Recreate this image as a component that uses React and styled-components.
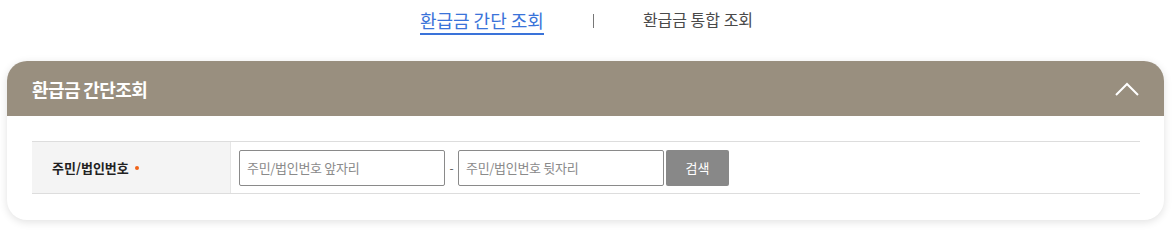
import React from "react";
import styled, { createGlobalStyle } from "styled-components";

const Global = createGlobalStyle`
  html, body { margin: 0; padding: 0; background: #fff; }
  body { font-family: "Noto Sans CJK KR", "Noto Sans", sans-serif; }
  * { box-sizing: border-box; }
`;

const Page = styled.div`
  width: 1175px;
  height: 237px;
  padding-top: 5px;
`;

const Tabs = styled.nav`
  display: flex;
  justify-content: center;
  align-items: center;
  gap: 49px;
  height: 31px;
  padding-right: 2px;
`;

const Tab = styled.a`
  font-size: ${(p) => (p.$active ? "18px" : "16px")};
  color: ${(p) => (p.$active ? "#3a73d9" : "#4a4a4a")};
  font-weight: 400;
  line-height: 25px;
  text-decoration: none;
  padding-top: ${(p) => (p.$active ? "2px" : "0")};
  border-bottom: 2px solid ${(p) => (p.$active ? "#3a73d9" : "transparent")};
`;

const Sep = styled.span`
  width: 1px;
  height: 14px;
  background: #777;
`;

const Card = styled.section`
  margin: 25px 11px 0 7px;
  border-radius: 20px;
  background: #fff;
  box-shadow: 0 2px 8px rgba(0, 0, 0, 0.12);
  overflow: hidden;
`;

const Header = styled.header`
  height: 55px;
  background: #998f7f;
  display: flex;
  align-items: center;
  justify-content: space-between;
  padding: 0 25px;
`;

const Title = styled.h2`
  margin: 0;
  font-size: 18px;
  font-weight: 700;
  color: #fff;
  letter-spacing: -0.6px;
`;

const Body = styled.div`
  padding: 25px 24px 26px 25px;
`;

const Row = styled.div`
  display: grid;
  grid-template-columns: 199px 1fr;
  border-top: 1px solid #ddd;
  border-bottom: 1px solid #ddd;
  height: 53px;
`;

const Label = styled.div`
  background: #f4f4f4;
  border-right: 1px solid #e6e6e6;
  display: flex;
  align-items: center;
  padding-left: 20px;
  font-size: 13px;
  font-weight: 700;
  color: #222;
`;

const Req = styled.span`
  width: 4px;
  height: 4px;
  border-radius: 50%;
  background: #f06318;
  margin-left: 6px;
`;

const Field = styled.div`
  display: flex;
  align-items: center;
  padding-left: 8px;
`;

const Input = styled.input`
  width: 206px;
  height: 36px;
  border: 1px solid #8a8a8a;
  border-radius: 2px;
  padding: 0 7px;
  font-family: inherit;
  font-size: 13px;
  letter-spacing: -0.3px;
  color: #333;
  outline: none;
  &::placeholder { color: #8a8a8a; }
`;

const Dash = styled.span`
  font-size: 12px;
  color: #555;
  width: 13px;
  text-align: center;
`;

const Button = styled.button`
  margin-left: 2px;
  width: 63px;
  height: 36px;
  border: 0;
  border-radius: 2px;
  background: #888;
  color: #fff;
  font-family: inherit;
  font-size: 13px;
`;

const Toggle = styled.button`
  background: none;
  border: 0;
  padding: 0;
  display: flex;
`;

export default function App() {
  return (
    <Page>
      <Global />
      <Tabs>
        <Tab $active>환급금 간단 조회</Tab>
        <Sep />
        <Tab>환급금 통합 조회</Tab>
      </Tabs>
      <Card>
        <Header>
          <Title>환급금 간단조회</Title>
          <Toggle aria-label="접기">
            <svg width="24" height="14" viewBox="0 0 24 14">
              <polyline points="1,13 12,2 23,13" fill="none" stroke="#fff" strokeWidth="2" />
            </svg>
          </Toggle>
        </Header>
        <Body>
          <Row>
            <Label>
              주민/법인번호<Req />
            </Label>
            <Field>
              <Input placeholder="주민/법인번호 앞자리" />
              <Dash>-</Dash>
              <Input placeholder="주민/법인번호 뒷자리" />
              <Button>검색</Button>
            </Field>
          </Row>
        </Body>
      </Card>
    </Page>
  );
}
